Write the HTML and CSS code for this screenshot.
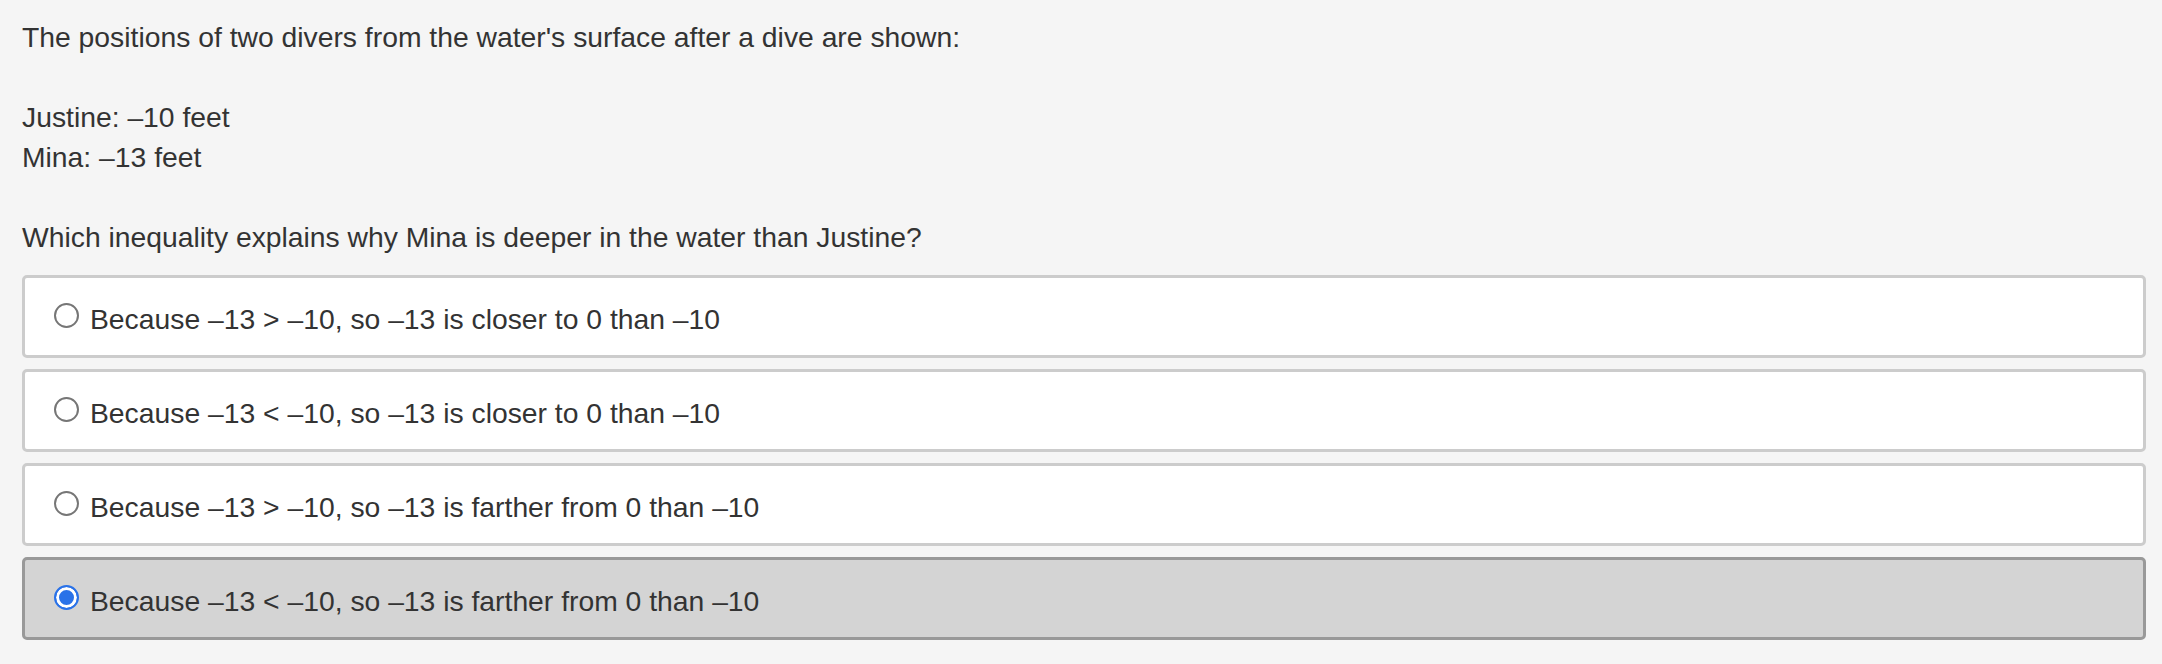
FILE: index.html
```html
<!DOCTYPE html>
<html>
<head>
<meta charset="utf-8">
<link rel="stylesheet" href="styles.css">
</head>
<body>
<div class="page">
  <div class="question">
    <p class="line">The positions of two divers from the water's surface after a dive are shown:</p>
    <p class="line spacer"></p>
    <p class="line">Justine: &ndash;10 feet</p>
    <p class="line">Mina: &ndash;13 feet</p>
    <p class="line spacer"></p>
    <p class="line">Which inequality explains why Mina is deeper in the water than Justine?</p>
  </div>
  <div class="choices">
    <label class="choice">
      <span class="radio"></span>
      <span class="choice-text">Because &ndash;13 &gt; &ndash;10, so &ndash;13 is closer to 0 than &ndash;10</span>
    </label>
    <label class="choice">
      <span class="radio"></span>
      <span class="choice-text">Because &ndash;13 &lt; &ndash;10, so &ndash;13 is closer to 0 than &ndash;10</span>
    </label>
    <label class="choice">
      <span class="radio"></span>
      <span class="choice-text">Because &ndash;13 &gt; &ndash;10, so &ndash;13 is farther from 0 than &ndash;10</span>
    </label>
    <label class="choice selected">
      <span class="radio checked"></span>
      <span class="choice-text">Because &ndash;13 &lt; &ndash;10, so &ndash;13 is farther from 0 than &ndash;10</span>
    </label>
  </div>
</div>
</body>
</html>
```

FILE: styles.css
```css
html, body {
  margin: 0;
  padding: 0;
  background: #f5f5f5;
}

.page {
  padding: 17px 16px 0 22px;
  font-family: "Liberation Sans", Arial, sans-serif;
  font-size: 28.3px;
  line-height: 40px;
  color: #333333;
}

.line {
  margin: 0;
  height: 40px;
}

.choices {
  margin-top: 18px;
  display: flex;
  flex-direction: column;
  gap: 11px;
}

.choice {
  display: flex;
  align-items: center;
  background: #ffffff;
  border: 3px solid #cccccc;
  border-radius: 5px;
  padding: 21px 20px 16px 29px;
}

.choice.selected {
  background: #d4d4d4;
  border-color: #999999;
}

.radio {
  flex: none;
  width: 25px;
  height: 25px;
  box-sizing: border-box;
  border: 2px solid #767676;
  border-radius: 50%;
  background: #ffffff;
  margin-right: 11px;
  margin-top: -7px;
}

.radio.checked {
  border: 2px solid #2a72e8;
  background: #2a72e8;
  box-shadow: inset 0 0 0 3px #ffffff;
}

.choice-text {
  white-space: nowrap;
}
```
